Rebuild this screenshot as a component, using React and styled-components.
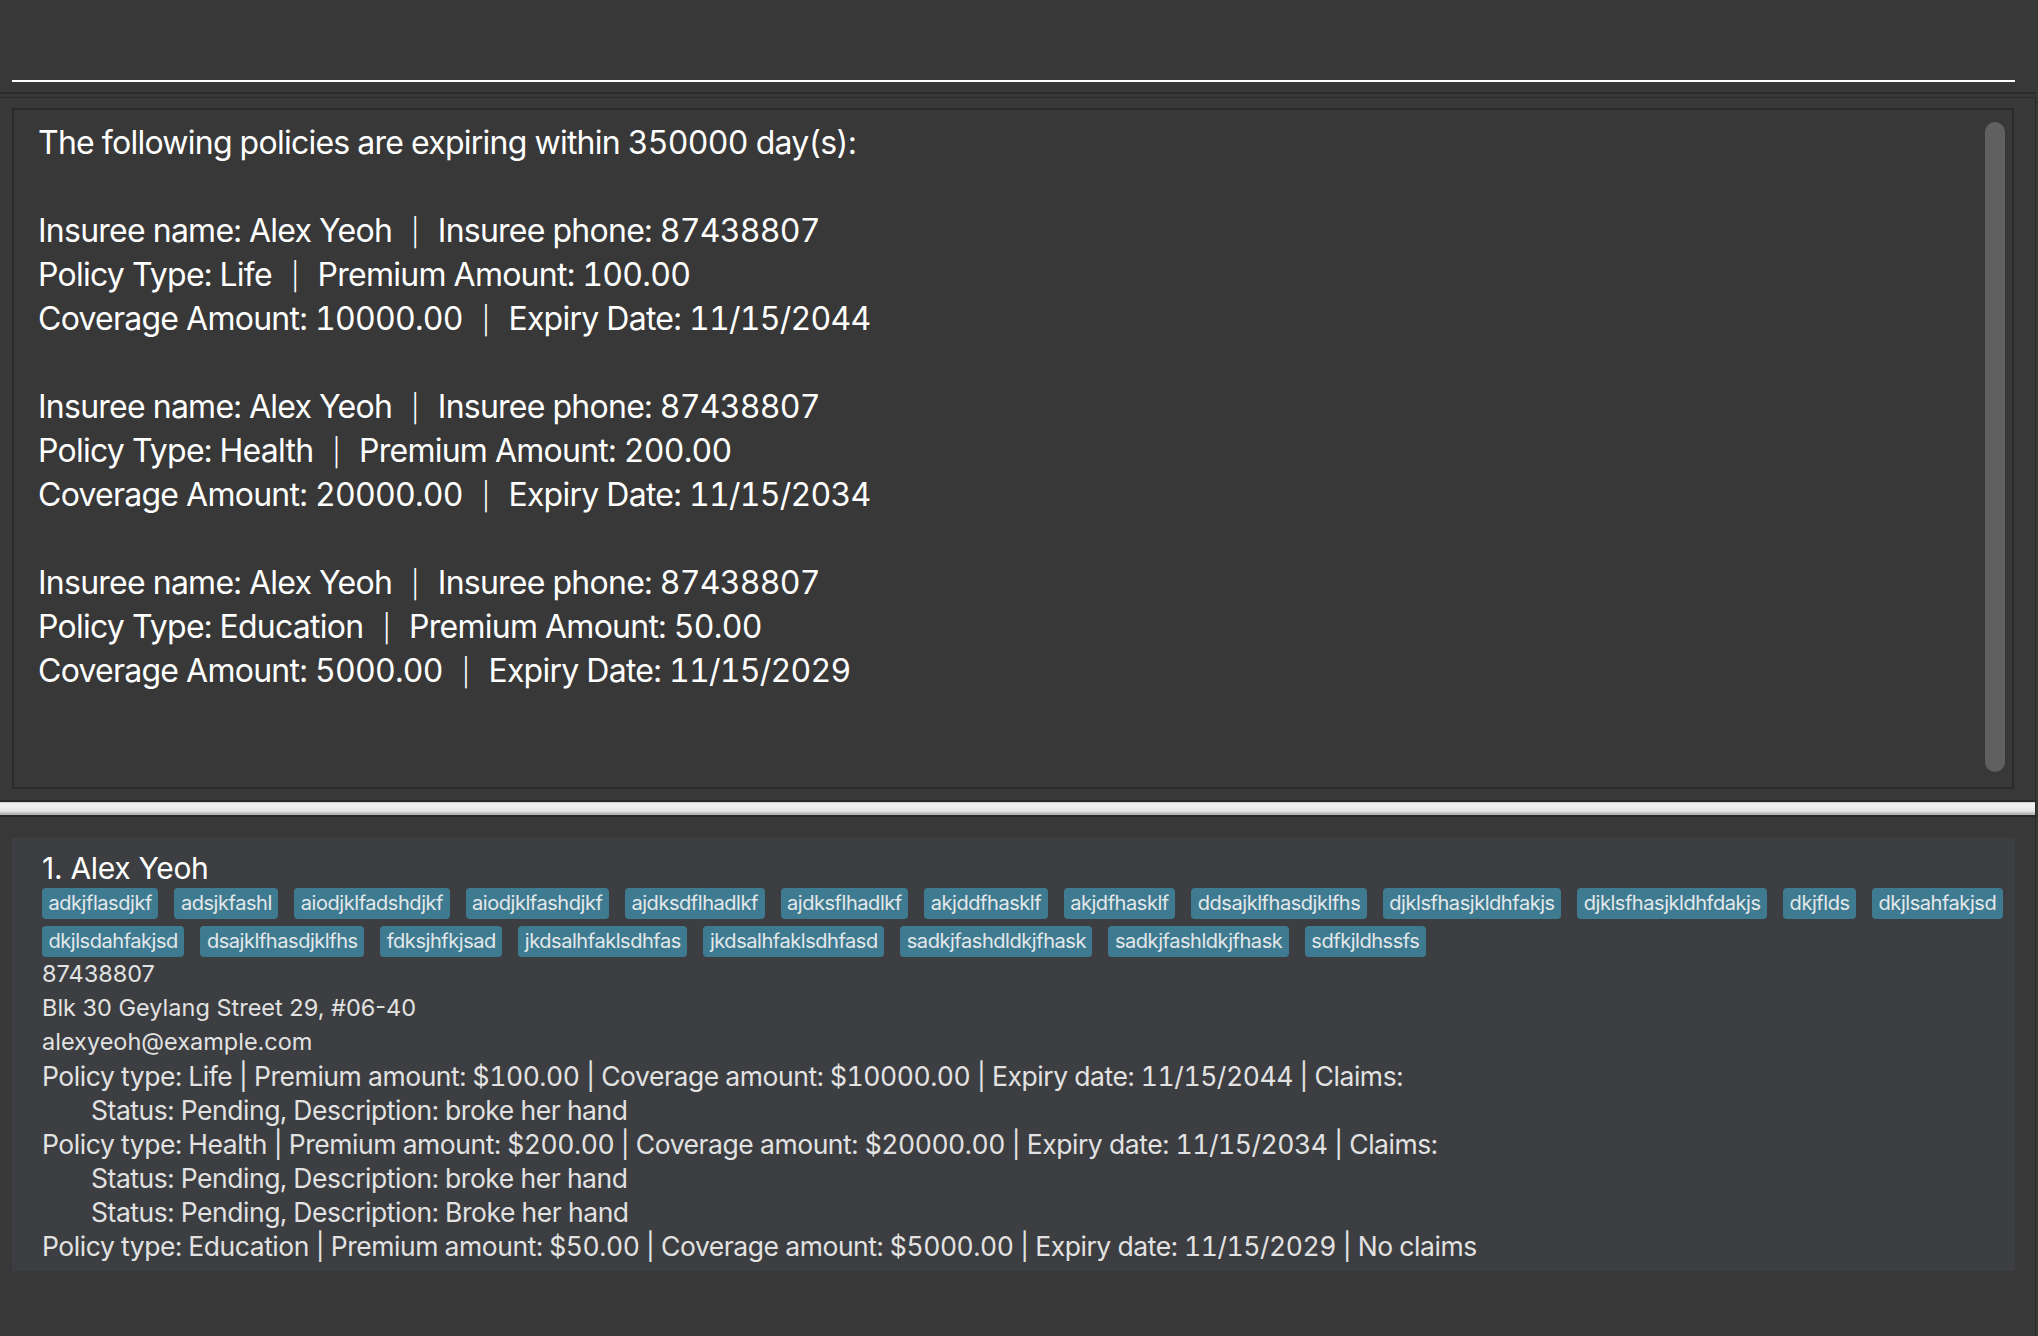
import React from "react";
import styled, { createGlobalStyle } from "styled-components";

const GlobalStyle = createGlobalStyle`
  html, body {
    margin: 0;
    padding: 0;
    background: #383838;
  }
`;

const Window = styled.div`
  width: 2038px;
  height: 1336px;
  background: #383838;
  display: flex;
  flex-direction: column;
  overflow: hidden;
  font-family: Inter, "Noto Sans", sans-serif;
  color: #ffffff;
`;

const CommandBar = styled.div`
  width: 2036px;
  height: 94px;
  box-sizing: border-box;
  padding: 0 21px 10px 12px;
  display: flex;
  align-items: flex-end;
  border-bottom: 2px solid #2a2a2a;
`;

const CommandField = styled.div`
  flex: 1;
  height: 80px;
  border-bottom: 2px solid #ffffff;
`;

const SplitPane = styled.div`
  margin-top: 3px;
  width: 2035px;
  flex: 1;
  display: flex;
  flex-direction: column;
  border-top: 1px solid #2a2a2a;
  border-right: 1px solid #2a2a2a;
`;

const ResultPane = styled.div`
  padding: 10px 21px 11px 12px;
`;

const ResultBox = styled.div`
  height: 681px;
  box-sizing: border-box;
  border: 2px solid #2b2b2b;
  display: flex;
`;

const ResultText = styled.div`
  flex: 1;
  padding: 11px 0 0 24px;
  font-size: 32px;
  line-height: 44px;
  letter-spacing: -0.75px;
  font-variant-numeric: tabular-nums;
  white-space: pre;
  color: #ffffff;
`;

const ResultRow = styled.div`
  height: 44px;
`;

const Sep = styled.span`
  margin: 0 19px;
  font-size: 27px;
  line-height: 1;
  font-weight: 300;
`;

const ScrollTrack = styled.div`
  width: 20px;
  margin-right: 7px;
  padding: 12px 0 15px;
  display: flex;
`;

const Thumb = styled.div`
  flex: 1;
  background: #606060;
  border-radius: 10px;
`;

const Splitter = styled.div`
  height: 13px;
  border-top: 2px solid #2a2a2a;
  border-bottom: 2px solid #2a2a2a;
  background: linear-gradient(#cacaca 0, #f4f4f4 14%, #e6e6e6 70%, #bcbcbc 86%, #b4b4b4 100%);
`;

const ListPane = styled.div`
  flex: 1;
  padding: 21px 20px 0 12px;
`;

const Card = styled.div`
  background: #3c3e41;
  padding: 11px 4px 8px 30px;
`;

const Name = styled.div`
  font-size: 30px;
  line-height: 38px;
  letter-spacing: -0.3px;
  color: #ffffff;
`;

const Tags = styled.div`
  display: flex;
  flex-wrap: wrap;
  gap: 7px 16px;
  padding-top: 1px;
`;

const Tag = styled.span`
  background: #3e7b91;
  color: #e4e8ea;
  font-size: 20px;
  line-height: 31px;
  height: 31px;
  padding: 0 6.5px;
  border-radius: 4px;
  letter-spacing: -0.45px;
`;

const Field = styled.div`
  font-size: 23.5px;
  line-height: 34px;
  color: #e2e2e2;
`;

const Line = styled.div`
  font-size: 26.5px;
  line-height: 34px;
  letter-spacing: -0.45px;
  font-variant-numeric: tabular-nums;
  color: #e2e2e2;
  white-space: pre;
  padding-left: ${(p) => (p.$indent ? "49px" : "0")};
`;

const resultLines = [
  ["The following policies are expiring within 350000 day(s):"],
  [],
  ["Insuree name: Alex Yeoh", "Insuree phone: 87438807"],
  ["Policy Type: Life", "Premium Amount: 100.00"],
  ["Coverage Amount: 10000.00", "Expiry Date: 11/15/2044"],
  [],
  ["Insuree name: Alex Yeoh", "Insuree phone: 87438807"],
  ["Policy Type: Health", "Premium Amount: 200.00"],
  ["Coverage Amount: 20000.00", "Expiry Date: 11/15/2034"],
  [],
  ["Insuree name: Alex Yeoh", "Insuree phone: 87438807"],
  ["Policy Type: Education", "Premium Amount: 50.00"],
  ["Coverage Amount: 5000.00", "Expiry Date: 11/15/2029"],
];

const tags = [
  "adkjflasdjkf",
  "adsjkfashl",
  "aiodjklfadshdjkf",
  "aiodjklfashdjkf",
  "ajdksdflhadlkf",
  "ajdksflhadlkf",
  "akjddfhasklf",
  "akjdfhasklf",
  "ddsajklfhasdjklfhs",
  "djklsfhasjkldhfakjs",
  "djklsfhasjkldhfdakjs",
  "dkjflds",
  "dkjlsahfakjsd",
  "dkjlsdahfakjsd",
  "dsajklfhasdjklfhs",
  "fdksjhfkjsad",
  "jkdsalhfaklsdhfas",
  "jkdsalhfaklsdhfasd",
  "sadkjfashdldkjfhask",
  "sadkjfashldkjfhask",
  "sdfkjldhssfs",
];

const fields = ["87438807", "Blk 30 Geylang Street 29, #06-40", "alexyeoh@example.com"];

const policies = [
  {
    text: "Policy type: Life | Premium amount: $100.00 | Coverage amount: $10000.00 | Expiry date: 11/15/2044 | Claims:",
  },
  { text: "Status: Pending, Description: broke her hand", indent: true },
  {
    text: "Policy type: Health | Premium amount: $200.00 | Coverage amount: $20000.00 | Expiry date: 11/15/2034 | Claims:",
  },
  { text: "Status: Pending, Description: broke her hand", indent: true },
  { text: "Status: Pending, Description: Broke her hand", indent: true },
  {
    text: "Policy type: Education | Premium amount: $50.00 | Coverage amount: $5000.00 | Expiry date: 11/15/2029 | No claims",
  },
];

const ResultLine = ({ parts }) => (
  <ResultRow>
    {parts.map((p, i) => (
      <React.Fragment key={i}>
        {i > 0 && <Sep>|</Sep>}
        {p}
      </React.Fragment>
    ))}
  </ResultRow>
);

const App = () => {
  return (
    <Window>
      <GlobalStyle />
      <CommandBar>
        <CommandField />
      </CommandBar>
      <SplitPane>
        <ResultPane>
          <ResultBox>
            <ResultText>
              {resultLines.map((parts, i) => (
                <ResultLine key={i} parts={parts} />
              ))}
            </ResultText>
            <ScrollTrack>
              <Thumb />
            </ScrollTrack>
          </ResultBox>
        </ResultPane>
        <Splitter />
        <ListPane>
          <Card>
            <Name>1. Alex Yeoh</Name>
            <Tags>
              {tags.map((t) => (
                <Tag key={t}>{t}</Tag>
              ))}
            </Tags>
            {fields.map((f) => (
              <Field key={f}>{f}</Field>
            ))}
            {policies.map((d, i) => (
              <Line key={i} $indent={d.indent}>
                {d.text}
              </Line>
            ))}
          </Card>
        </ListPane>
      </SplitPane>
    </Window>
  );
};

export default App;
